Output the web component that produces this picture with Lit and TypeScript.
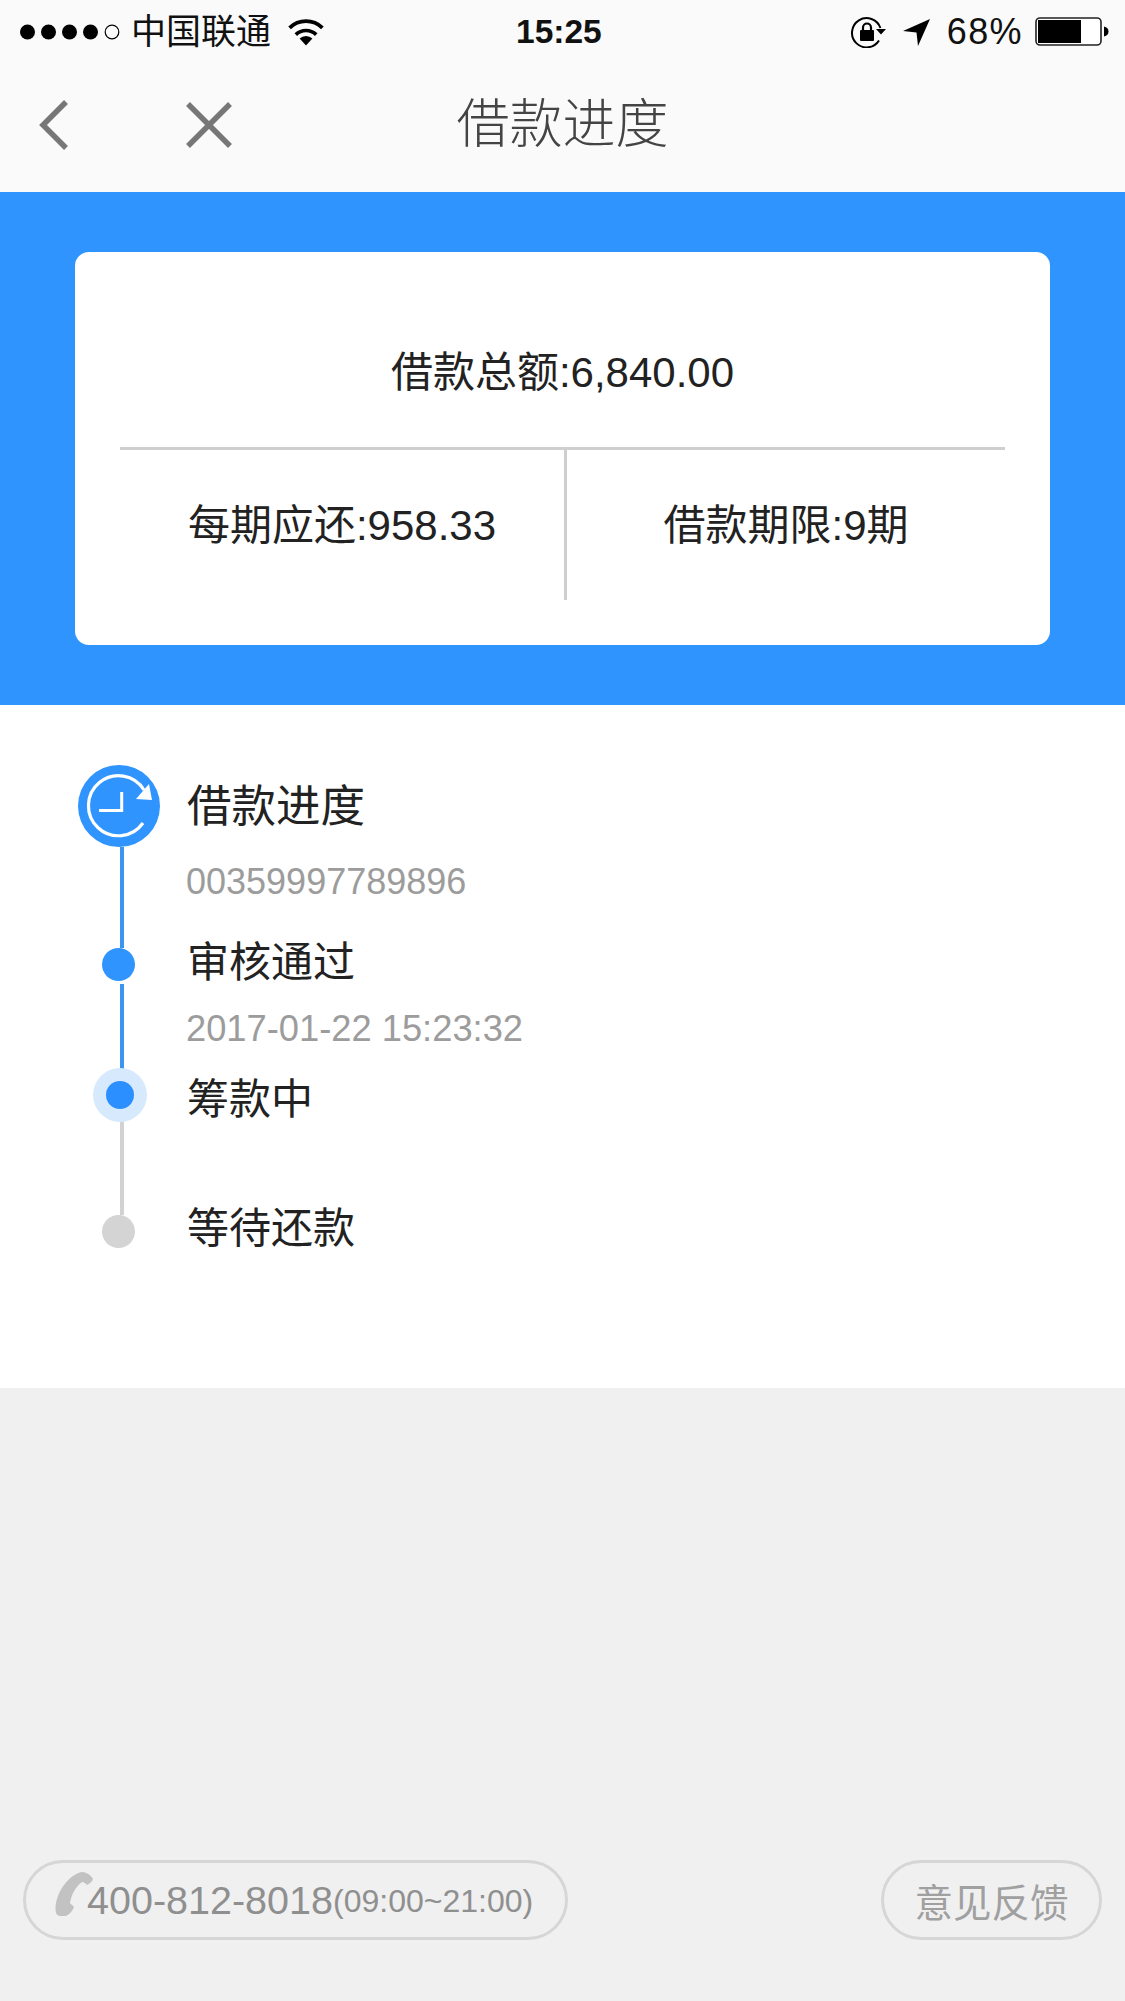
import { LitElement, html, css } from "lit";
import { customElement } from "lit/decorators.js";

@customElement("app-root")
export class AppRoot extends LitElement {
  static styles = css`
    :host {
      display: flex;
      flex-direction: column;
      width: 1125px;
      height: 2001px;
      overflow: hidden;
      background: #f0f0f0;
      color: #222;
      font-family: "Liberation Sans", "Noto Sans CJK SC", sans-serif;
    }
    .top { background: #fafafa; height: 192px; flex: none; }
    .status {
      height: 64px;
      display: grid;
      grid-template-columns: 496px auto 1fr;
      align-items: center;
      color: #111;
      padding: 0 16px 0 20px;
    }
    .status-left, .status-right { display: flex; align-items: center; }
    .status-right { justify-content: flex-end; }
    .carrier { font-size: 35px; line-height: 44px; margin-left: 10px; color: #111; }
    .wifi { margin-left: 16px; }
    .time { font-size: 33.5px; font-weight: 700; line-height: 44px; }
    .lock { margin-right: 17px; }
    .loc { margin-right: 17px; }
    .pct { font-size: 36px; line-height: 44px; margin-right: 12px; letter-spacing: 1.4px; }
    .nav {
      height: 128px;
      display: grid;
      grid-template-columns: 1fr auto 1fr;
      align-items: center;
      padding: 0 0 6px 0;
      box-sizing: border-box;
    }
    .nav-left { display: flex; align-items: center; gap: 113px; padding-left: 35px; }
    .title { font-size: 53px; line-height: 64px; color: #444; font-weight: 300; }
    .hero {
      background: #3094ff;
      flex: none;
      height: 513px;
      padding: 60px 75px;
      box-sizing: border-box;
    }
    .card {
      background: #fff;
      border-radius: 14px;
      height: 393px;
      padding: 0 45px;
      box-sizing: border-box;
      display: flex;
      flex-direction: column;
      font-size: 42px;
    }
    .total {
      height: 195px;
      border-bottom: 3px solid #cfcfcf;
      text-align: center;
      line-height: 242px;
    }
    .cells { display: flex; height: 150px; }
    .cell { display: flex; align-items: center; justify-content: center; padding-bottom: 7px; box-sizing: border-box; }
    .cell.a { width: 447px; border-right: 3px solid #cfcfcf; }
    .cell.b { flex: 1; }
    .steps {
      background: #fff;
      flex: none;
      height: 683px;
      box-sizing: border-box;
      padding-top: 60px;
    }
    .row { display: grid; grid-template-columns: 187px 1fr; position: relative; }
    .r1 { height: 170px; }
    .r2 { height: 133px; }
    .r3 { height: 133px; }
    .r4 { height: 100px; }
    .marker { position: relative; z-index: 1; border-radius: 50%; }
    .big { width: 82px; height: 82px; margin-left: 78px; background: #3094ff; }
    .big svg { display: block; }
    .dot { width: 33px; height: 33px; margin-left: 102px; background: #3094ff; }
    .r2 .dot { margin-top: 13px; }
    .r4 .dot { margin-top: 14px; background: #d4d4d4; }
    .halo {
      width: 54px; height: 54px; margin-left: 93px;
      background: #d6e9fd;
      display: flex; align-items: center; justify-content: center;
    }
    .halo i { display: block; width: 28px; height: 28px; border-radius: 50%; background: #2b8fff; z-index: 2; }
    .line { position: absolute; left: 120px; width: 3.5px; background: #3b95ee; }
    .line.l1 { top: 82px; height: 101px; }
    .line.l2 { top: 49px; height: 100px; }
    .line.l3 { top: 53px; height: 94px; background: #d2d2d2; }
    .name { font-size: 42px; line-height: 55px; color: #222; }
    .r1 .name { font-size: 44.5px; line-height: 84px; }
    .r3 .name { line-height: 63px; }
    .r4 .name { line-height: 55px; }
    .sub { font-size: 36px; line-height: 44px; color: #9c9c9c; margin-left: -1px; }
    .r1 .sub { margin-top: 11px; }
    .r2 .sub { margin-top: 17px; font-size: 36.3px; }
    .foot {
      flex: 1;
      display: flex;
      justify-content: space-between;
      align-items: flex-end;
      padding: 0 23px 61px 23px;
    }
    .pill {
      height: 80px;
      box-sizing: border-box;
      border: 3px solid #d6d6d6;
      border-radius: 40px;
      display: flex;
      align-items: center;
      color: #8f8f8f;
    }
    .phone { width: 545px; padding-left: 29px; }
    .phone svg { margin-right: -6px; margin-top: -12px; }
    .num { font-size: 39.5px; }
    .hours { font-size: 32px; margin-top: 3px; }
    .feedback { width: 221px; justify-content: center; font-size: 38.5px; color: #a0a0a0; }
  `;

  render() {
    return html`
      <div class="top">
        <div class="status">
          <div class="status-left">
            <svg width="101" height="16" viewBox="0 0 101 16">
              <circle cx="7.500" cy="8" r="7.500" fill="#000"></circle>
              <circle cx="28.500" cy="8" r="7.500" fill="#000"></circle>
              <circle cx="49.500" cy="8" r="7.500" fill="#000"></circle>
              <circle cx="70.500" cy="8" r="7.500" fill="#000"></circle>
              <circle cx="92" cy="8" r="6.800" fill="none" stroke="#000" stroke-width="1.200"></circle>
            </svg>
            <span class="carrier">中国联通</span>
            <svg class="wifi" width="38" height="28" viewBox="0 0 38 28">
              <path d="M19 27.500 12.600 20.600a9 9 0 0 1 12.800 0Z" fill="#000"></path>
              <path d="M8.800 16.600a14.600 14.600 0 0 1 20.400 0" fill="none" stroke="#000" stroke-width="3.600"></path>
              <path d="M2.600 9.800a23.500 23.500 0 0 1 32.800 0" fill="none" stroke="#000" stroke-width="3.800"></path>
            </svg>
          </div>
          <div class="time">15:25</div>
          <div class="status-right">
            <svg class="lock" width="35" height="32" viewBox="0 0 35 32">
              <path d="M28 24.500A14.600 14.600 0 1 1 29.400 12" fill="none" stroke="#000" stroke-width="2"></path>
              <path d="M25 13h10l-5 5.500Z" fill="#000"></path>
              <rect x="9" y="14" width="14" height="11" rx="1" fill="#000"></rect>
              <path d="M12 14.500V11.500a4 4 0 0 1 8 0v3" fill="none" stroke="#000" stroke-width="2.200"></path>
            </svg>
            <svg class="loc" width="27" height="27" viewBox="0 0 27 27">
              <path d="M0 12 27 0 15 27 13.500 13.500Z" fill="#000"></path>
            </svg>
            <span class="pct">68%</span>
            <svg width="74" height="30" viewBox="0 0 74 30">
              <rect x="1" y="1" width="65" height="27" rx="4" fill="#fff" stroke="#222" stroke-width="1.600"></rect>
              <rect x="3" y="3" width="43" height="23" fill="#000"></rect>
              <path d="M69 9.500c3 .5 4.500 2.500 4.500 5s-1.500 4.500-4.500 5Z" fill="#000"></path>
            </svg>
          </div>
        </div>
        <div class="nav">
          <div class="nav-left">
            <svg width="37" height="52" viewBox="0 0 37 52">
              <path d="M31 3 8 26l23 23" fill="none" stroke="#777" stroke-width="5.500"></path>
            </svg>
            <svg width="48" height="48" viewBox="0 0 48 48">
              <path d="M3 3l42 42M45 3 3 45" fill="none" stroke="#777" stroke-width="5.500"></path>
            </svg>
          </div>
          <div class="title">借款进度</div>
          <div></div>
        </div>
      </div>

      <div class="hero">
        <div class="card">
          <div class="total">借款总额:6,840.00</div>
          <div class="cells">
            <div class="cell a">每期应还:958.33</div>
            <div class="cell b">借款期限:9期</div>
          </div>
        </div>
      </div>

      <div class="steps">
        <div class="row r1">
          <div class="marker big">
            <svg width="82" height="82" viewBox="0 0 82 82">
              <path d="M65 58A30 30 0 1 1 66 25" fill="none" stroke="#fff" stroke-width="3.200"></path>
              <path d="M71 19 74 35 58 34Z" fill="#fff"></path>
              <path d="M43.700 27V45.500H21" fill="none" stroke="#fff" stroke-width="3"></path>
            </svg>
          </div>
          <div>
            <div class="name">借款进度</div>
            <div class="sub">00359997789896</div>
          </div>
          <div class="line l1"></div>
        </div>
        <div class="row r2">
          <div class="marker dot"></div>
          <div>
            <div class="name">审核通过</div>
            <div class="sub">2017-01-22 15:23:32</div>
          </div>
          <div class="line l2"></div>
        </div>
        <div class="row r3">
          <div class="marker halo"><i></i></div>
          <div class="name">筹款中</div>
          <div class="line l3"></div>
        </div>
        <div class="row r4">
          <div class="marker dot"></div>
          <div class="name">等待还款</div>
        </div>
      </div>

      <div class="foot">
        <div class="pill phone">
          <svg width="38" height="44" viewBox="0 0 38 44">
            <path d="M27 0c4 0 9 3 11 7-1 3-3 4-6 6-1-1-3-3-5-3C20 15 16 24 15 31c1 2 3 2 4 4-1 3-4 7-8 9-4 1-9 0-10-3C-1 33 3 21 9 13 14 6 21 1 27 0Z" fill="#c2c2c2"></path>
          </svg>
          <span class="num">400-812-8018</span><span class="hours">(09:00~21:00)</span>
        </div>
        <div class="pill feedback">意见反馈</div>
      </div>
    `;
  }
}
